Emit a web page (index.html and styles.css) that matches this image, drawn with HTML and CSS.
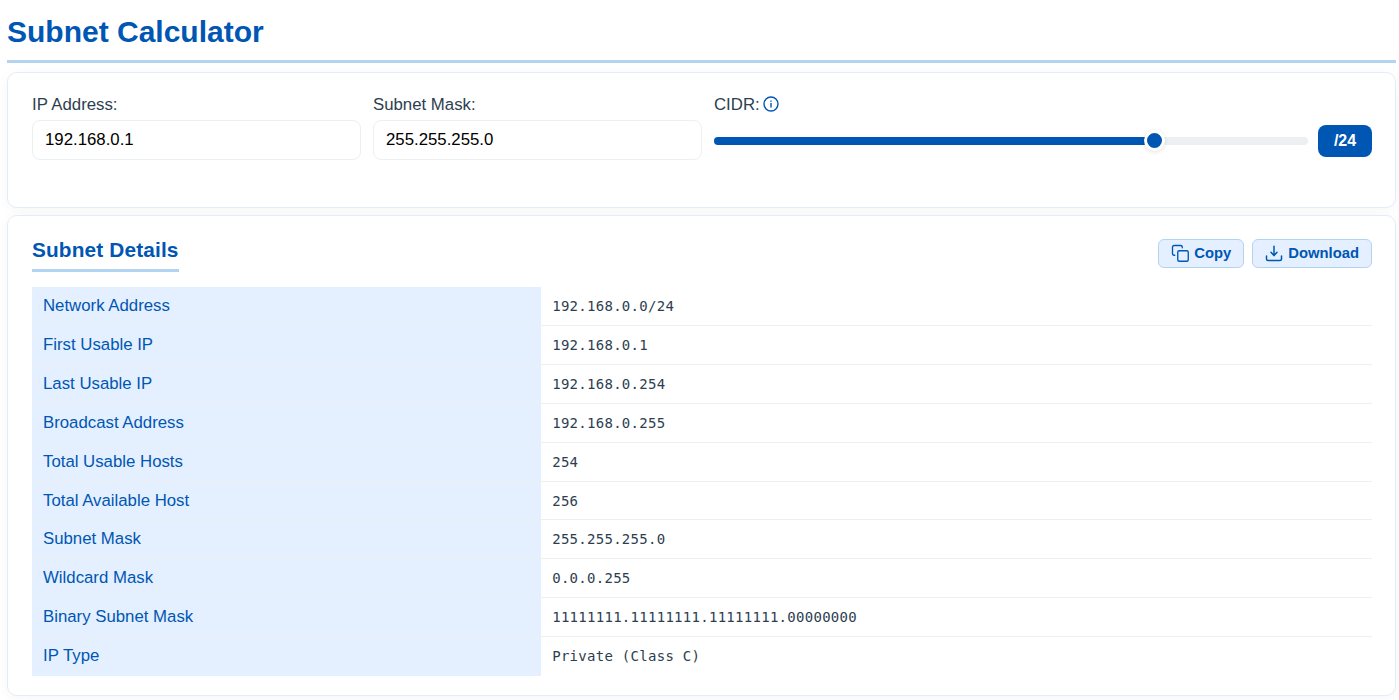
FILE: index.html
```html
<!DOCTYPE html>
<html lang="en">
<head>
  <meta charset="UTF-8">
  <title>Subnet Calculator</title>
  <link rel="stylesheet" href="styles.css">
</head>
<body>
  <h1>Subnet Calculator</h1>

  <div class="card form">
    <div class="field">
      <label for="ip">IP Address:</label>
      <input type="text" id="ip" value="192.168.0.1">
    </div>
    <div class="field">
      <label for="mask">Subnet Mask:</label>
      <input type="text" id="mask" value="255.255.255.0">
    </div>
    <div class="field cidr">
      <label>CIDR:
        <svg class="info" viewBox="0 0 16 16" fill="none" stroke="currentColor" stroke-width="1.4">
          <circle cx="8" cy="8" r="7"/>
          <path d="M8 7v4.4M8 4.4v1.4"/>
        </svg>
      </label>
      <div class="slider-row">
        <div class="slider">
          <div class="fill" style="width: 74.2%"><span class="thumb"></span></div>
        </div>
        <span class="cidr-value">/24</span>
      </div>
    </div>
  </div>

  <div class="card details">
    <div class="details-header">
      <h2>Subnet Details</h2>
      <div class="actions">
        <button>
          <svg viewBox="0 0 24 24" fill="none" stroke="currentColor" stroke-width="1.8" stroke-linecap="round" stroke-linejoin="round">
            <rect x="9" y="9" width="14" height="14" rx="2"/>
            <path d="M5 15H4a2 2 0 0 1-2-2V4a2 2 0 0 1 2-2h9a2 2 0 0 1 2 2v1"/>
          </svg>
          Copy
        </button>
        <button>
          <svg viewBox="0 0 24 24" fill="none" stroke="currentColor" stroke-width="2" stroke-linecap="round" stroke-linejoin="round">
            <path d="M22 16v4a2 2 0 0 1-2 2H4a2 2 0 0 1-2-2v-4"/>
            <path d="M8 11l4 4.5 4-4.5M12 15V3"/>
          </svg>
          Download
        </button>
      </div>
    </div>

    <table>
      <tr><th>Network Address</th><td>192.168.0.0/24</td></tr>
      <tr><th>First Usable IP</th><td>192.168.0.1</td></tr>
      <tr><th>Last Usable IP</th><td>192.168.0.254</td></tr>
      <tr><th>Broadcast Address</th><td>192.168.0.255</td></tr>
      <tr><th>Total Usable Hosts</th><td>254</td></tr>
      <tr><th>Total Available Host</th><td>256</td></tr>
      <tr><th>Subnet Mask</th><td>255.255.255.0</td></tr>
      <tr><th>Wildcard Mask</th><td>0.0.0.255</td></tr>
      <tr><th>Binary Subnet Mask</th><td>11111111.11111111.11111111.00000000</td></tr>
      <tr><th>IP Type</th><td>Private (Class C)</td></tr>
    </table>
  </div>
</body>
</html>
```
FILE: styles.css
```css
* {
  box-sizing: border-box;
}

body {
  margin: 0;
  padding: 0 3px 0 7px;
  height: 700px;
  overflow: hidden;
  background: #fff;
  color: #2c3e50;
  font-family: "Liberation Sans", Arial, sans-serif;
  font-size: 16.8px;
}

h1 {
  margin: 0 0 9px;
  padding-top: 14px;
  height: 63px;
  border-bottom: 3px solid #b3d4f0;
  color: #0056b3;
  font-size: 30px;
  line-height: 35px;
}

.card {
  background: #fff;
  border: 1px solid #e3edf7;
  border-radius: 10px;
  box-shadow: 0 2px 12px rgba(0, 0, 0, 0.04);
}

.form {
  display: flex;
  gap: 12px;
  height: 136px;
  padding: 22px 23px 0 24px;
  margin-bottom: 7px;
}

.field {
  width: 329px;
}

.field label {
  display: flex;
  align-items: center;
  height: 20px;
  margin-bottom: 5px;
}

.field input {
  display: block;
  width: 100%;
  height: 40px;
  padding: 0 12px;
  border: 1px solid #ecf0f1;
  border-radius: 8px;
  background: #fff;
  color: #000;
  font: inherit;
}

.cidr {
  flex: 1;
}

.info {
  width: 16px;
  height: 16px;
  margin: -2px 0 0 3px;
  color: #0056b3;
}

.slider-row {
  display: flex;
  align-items: center;
  gap: 10px;
  height: 42px;
}

.slider {
  flex: 1;
  height: 8px;
  border-radius: 4px;
  background: #ecf0f1;
}

.fill {
  position: relative;
  height: 8px;
  border-radius: 4px;
  background: #0056b3;
}

.thumb {
  position: absolute;
  top: -7px;
  right: -10px;
  width: 21px;
  height: 21px;
  border: 3px solid #fff;
  border-radius: 50%;
  background: #0056b3;
  box-shadow: 0 1px 4px rgba(0, 0, 0, 0.12);
}

.cidr-value {
  width: 54px;
  height: 32px;
  border-radius: 8px;
  background: #0056b3;
  color: #fff;
  font-size: 16px;
  font-weight: bold;
  line-height: 31px;
  text-align: center;
}

.details {
  height: 481px;
  padding: 20px 23px 0 24px;
}

.details-header {
  display: flex;
  justify-content: space-between;
  height: 51px;
}

h2 {
  margin: 0;
  height: 36px;
  border-bottom: 3px solid #b3d4f0;
  color: #0056b3;
  font-size: 20.8px;
  line-height: 27px;
  letter-spacing: 0.15px;
}

.actions {
  display: flex;
  gap: 8px;
  padding-top: 3px;
}

button {
  display: flex;
  align-items: center;
  gap: 5px;
  height: 29px;
  padding: 0 12px 1px;
  border: 1px solid #b3d4f0;
  border-radius: 6px;
  background: #e4f0ff;
  color: #0056b3;
  font: bold 14.8px "Liberation Sans", Arial, sans-serif;
}

button svg {
  width: 18px;
  height: 18px;
}

table,
tbody {
  display: block;
  width: 100%;
}

tr {
  display: flex;
  height: 38.91px;
}

th,
td {
  padding: 0 11px;
  border-bottom: 1px solid #ecf0f1;
  line-height: 37.4px;
  text-align: left;
}

th {
  width: 38%;
  background: #e4f0ff;
  color: #0056b3;
  font-weight: normal;
}

td {
  flex: 1;
  font-family: Consolas, "DejaVu Sans Mono", monospace;
  font-size: 14px;
  line-height: 38.4px;
  letter-spacing: 0.28px;
}

tr:last-child th,
tr:last-child td {
  border-bottom: none;
}
```
